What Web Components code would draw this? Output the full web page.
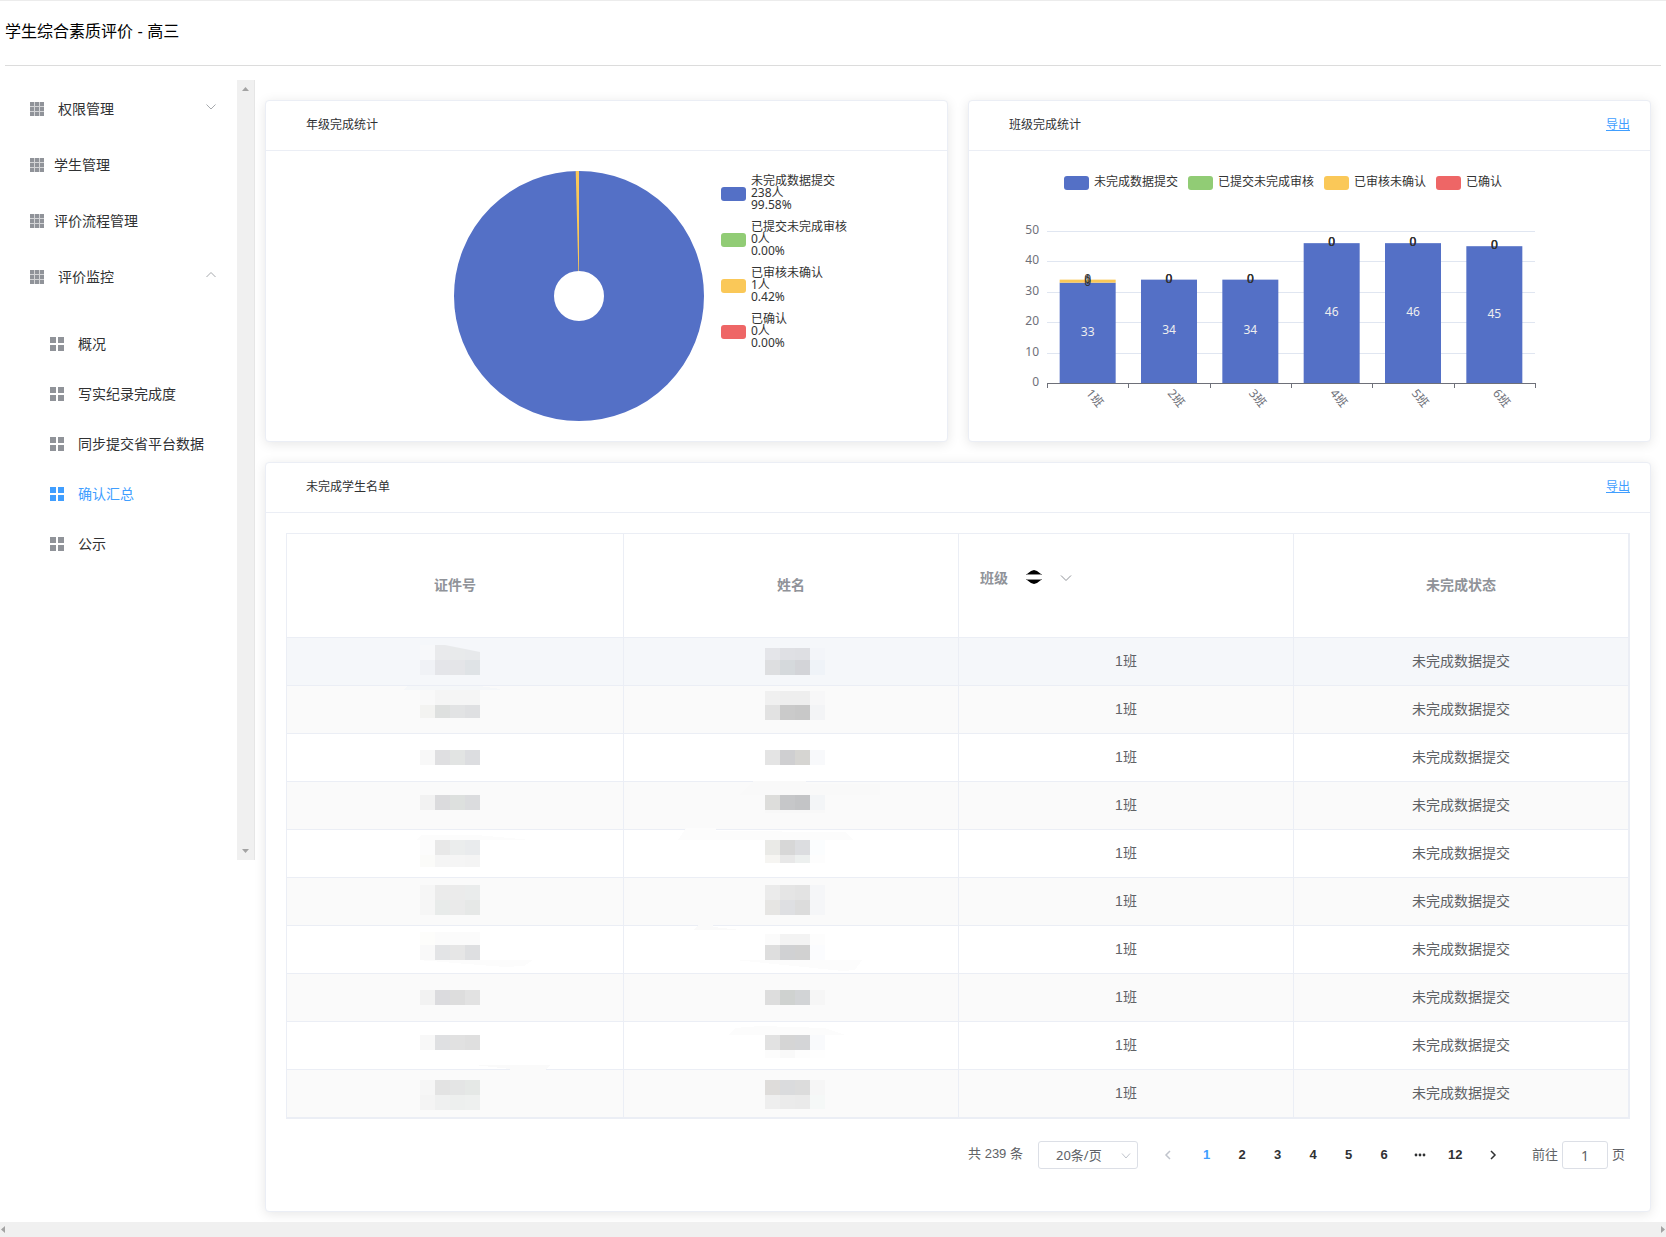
<!DOCTYPE html>
<html lang="zh-CN">
<head>
<meta charset="UTF-8">
<meta name="viewport" content="width=device-width, initial-scale=1.0">
<title>学生综合素质评价</title>
<style>
  html {
    --primary: #409eff;
    --text: #303133;
    --text-regular: #606266;
    --text-muted: #909399;
    --border: #ebeef5;
    --chart-font: "Noto Sans", "Noto Sans CJK SC", sans-serif;
  }
  body {
    margin: 0;
    min-height: 100vh;
    display: flex;
    flex-direction: column;
    background: #fff;
    color: var(--text);
    font-family: "Liberation Sans", "Noto Sans CJK SC", sans-serif;
    font-size: 14px;
  }
  .layout {
    flex: 1;
    display: flex;
    align-items: flex-start;
    margin-top: 14px;
  }
  main {
    flex: 1;
    min-width: 0;
    display: grid;
    grid-template-columns: 1fr 1fr;
    gap: 20px;
    padding: 20px 15px 10px 10px;
  }
  .wide { grid-column: 1 / -1; }
</style>
</head>
<body>
  <app-header>学生综合素质评价 - 高三</app-header>
  <div class="layout">
    <side-menu>
      <menu-item group>权限管理</menu-item>
      <menu-item>学生管理</menu-item>
      <menu-item>评价流程管理</menu-item>
      <menu-item group open>评价监控</menu-item>
      <menu-item slot="sub" sub>概况</menu-item>
      <menu-item slot="sub" sub>写实纪录完成度</menu-item>
      <menu-item slot="sub" sub>同步提交省平台数据</menu-item>
      <menu-item slot="sub" sub active>确认汇总</menu-item>
      <menu-item slot="sub" sub>公示</menu-item>
    </side-menu>
    <main>
      <panel-card>
        <span slot="title">年级完成统计</span>
        <pie-chart></pie-chart>
      </panel-card>
      <panel-card export>
        <span slot="title">班级完成统计</span>
        <bar-chart></bar-chart>
      </panel-card>
      <panel-card class="wide" export>
        <span slot="title">未完成学生名单</span>
        <student-table></student-table>
        <page-nav></page-nav>
      </panel-card>
    </main>
  </div>
  <scroll-strip></scroll-strip>

<script>
const SERIES = [
  { name: '未完成数据提交', color: '#5470c6', count: 238, percent: '99.58%' },
  { name: '已提交未完成审核', color: '#91cc75', count: 0, percent: '0.00%' },
  { name: '已审核未确认', color: '#fac858', count: 1, percent: '0.42%' },
  { name: '已确认', color: '#ee6666', count: 0, percent: '0.00%' }
];

class AppHeader extends HTMLElement {
  connectedCallback() {
    this.attachShadow({ mode: 'open' });
    this.shadowRoot.innerHTML = `
      <style>
        :host {
          display: block;
          padding: 0 5px;
          border-top: 1px solid #ececec;
        }
        h1 {
          margin: 0;
          padding-bottom: 2px;
          border-bottom: 1px solid #dcdcdc;
          color: #000;
          font-size: 16px;
          font-weight: 400;
          line-height: 62px;
        }
      </style>
      <h1><slot></slot></h1>
    `;
  }
}

class MenuItem extends HTMLElement {
  connectedCallback() {
    const sub = this.hasAttribute('sub');
    const group = this.hasAttribute('group');
    const open = this.hasAttribute('open');
    const size = sub ? 6 : 4;
    const step = sub ? 8 : 5;
    const count = sub ? 2 : 3;
    let squares = '';
    for (let r = 0; r < count; r++) {
      for (let c = 0; c < count; c++) {
        squares += `<rect x="${c * step}" y="${r * step}" width="${size}" height="${size}"/>`;
      }
    }
    // the nine squares stand on a lighter plate, so their gaps read as thin lines
    const plate = sub ? '' : '<rect width="14" height="14" opacity="0.4"/>';
    const icon = `<svg class="icon" viewBox="0 0 14 14" aria-hidden="true">${plate}${squares}</svg>`;
    const arrow = `<svg class="arrow" viewBox="0 0 12 8" aria-hidden="true"><path d="${open ? 'M1.500 6 L6 1.500 L10.500 6' : 'M1.500 1.500 L6 6 L10.500 1.500'}"/></svg>`;
    this.attachShadow({ mode: 'open' });
    this.shadowRoot.innerHTML = `
      <style>
        :host { display: block; }
        a, button {
          display: flex;
          align-items: center;
          box-sizing: border-box;
          width: 100%;
          height: 56px;
          padding: 0 20px 0 30px;
          gap: 10px;
          border: 0;
          background: none;
          color: var(--text);
          font: inherit;
          font-size: 14px;
          line-height: 20px;
          text-align: left;
          text-decoration: none;
          white-space: nowrap;
          cursor: pointer;
        }
        button { gap: 14px; }
        :host([sub]) a {
          height: 50px;
          padding-left: 50px;
          gap: 14px;
        }
        .icon { width: 14px; height: 14px; flex: none; fill: var(--text-muted); }
        :host([active]) a { color: var(--primary); }
        :host([active]) .icon { fill: var(--primary); }
        .arrow {
          width: 12px;
          height: 8px;
          margin-left: auto;
          margin-bottom: 4px;
          fill: none;
          stroke: #a6a9ad;
        }
      </style>
      ${group
        ? `<button type="button" aria-expanded="${open}">${icon}<slot></slot>${arrow}</button>`
        : `<a href="#">${icon}<slot></slot></a>`}
    `;
  }
}

class SideMenu extends HTMLElement {
  connectedCallback() {
    this.attachShadow({ mode: 'open' });
    this.shadowRoot.innerHTML = `
      <style>
        :host {
          display: flex;
          flex: none;
          box-sizing: border-box;
          width: 255px;
          height: 780px;
          border-right: 1px solid #e6e6e6;
        }
        nav { flex: 1; padding-top: 1px; }
        .sub { padding-top: 14px; }
        .track {
          display: flex;
          flex-direction: column;
          justify-content: space-between;
          align-items: center;
          box-sizing: border-box;
          width: 17px;
          padding: 7px 0;
          background: #f0f0f0;
        }
        .track svg { width: 7px; height: 4px; fill: #a3a3a3; }
      </style>
      <nav>
        <slot></slot>
        <div class="sub"><slot name="sub"></slot></div>
      </nav>
      <div class="track" aria-hidden="true">
        <svg viewBox="0 0 7 4"><path d="M0 4 L3.500 0 L7 4Z"/></svg>
        <svg viewBox="0 0 7 4"><path d="M0 0 L3.500 4 L7 0Z"/></svg>
      </div>
    `;
  }
}

class PanelCard extends HTMLElement {
  connectedCallback() {
    this.attachShadow({ mode: 'open' });
    this.shadowRoot.innerHTML = `
      <style>
        :host {
          display: block;
          min-width: 0;
          border: 1px solid var(--border);
          border-radius: 4px;
          background: #fff;
          box-shadow: 0 2px 12px rgba(0,0,0,0.1);
        }
        header {
          display: flex;
          justify-content: space-between;
          align-items: center;
          height: 47px;
          padding: 0 20px 2px 40px;
          border-bottom: 1px solid var(--border);
          font-size: 12px;
          line-height: 16px;
        }
        a { color: var(--primary); }
        .body { padding: 20px; }
      </style>
      <header>
        <slot name="title"></slot>
        ${this.hasAttribute('export') ? '<a href="#">导出</a>' : ''}
      </header>
      <div class="body"><slot></slot></div>
    `;
  }
}

class PieChart extends HTMLElement {
  connectedCallback() {
    // the only other visible slice is 1 of 239, it ends at twelve o'clock
    const angle = 2 * Math.PI / 239;
    const point = (r) => `${125 - r * Math.sin(angle)} ${125 - r * Math.cos(angle)}`;
    this.attachShadow({ mode: 'open' });
    this.shadowRoot.innerHTML = `
      <style>
        :host {
          display: flex;
          gap: 17px;
          height: 250px;
          padding-left: 168px;
          color: #333;
          font-family: var(--chart-font);
        }
        svg { width: 250px; height: 250px; flex: none; }
        ul { margin: 0; padding: 4px 0 0; list-style: none; }
        li {
          display: flex;
          align-items: center;
          gap: 5px;
          margin-bottom: 8px;
          font-size: 12px;
          line-height: 12px;
          white-space: nowrap;
        }
        i { width: 25px; height: 14px; border-radius: 3px; }
        div { padding-bottom: 2px; }
        span { display: block; }
      </style>
      <svg viewBox="0 0 250 250" role="img" aria-label="年级完成统计">
        <circle cx="125" cy="125" r="75" fill="none" stroke="#5470c6" stroke-width="100"/>
        <path d="M125 100 L125 0 L${point(125)} L${point(25)}Z" fill="#fac858"/>
      </svg>
      <ul>
        ${SERIES.map(s => `
          <li>
            <i style="background:${s.color}"></i>
            <div><span>${s.name}</span><span>${s.count}人</span><span>${s.percent}</span></div>
          </li>`).join('')}
      </ul>
    `;
  }
}

class BarChart extends HTMLElement {
  connectedCallback() {
    const rows = [[33, 0, 1, 0], [34, 0, 0, 0], [34, 0, 0, 0], [46, 0, 0, 0], [46, 0, 0, 0], [45, 0, 0, 0]];
    const left = 58, right = 546, top = 36, bottom = 188;
    const band = (right - left) / rows.length;
    const y = (v) => bottom - v * (bottom - top) / 50;
    let grid = '', bars = '', labels = '', axis = '';

    for (let v = 0; v <= 50; v += 10) {
      if (v) grid += `<line x1="${left}" x2="${right}" y1="${Math.round(y(v)) + 0.5}" y2="${Math.round(y(v)) + 0.5}" stroke="#e0e6f1"/>`;
      axis += `<text x="50" y="${y(v) + 3}" text-anchor="end">${v}</text>`;
    }
    rows.forEach((row, i) => {
      const center = left + band * (i + 0.5);
      let sum = 0;
      row.forEach((v, s) => {
        if (v) bars += `<rect x="${center - 28}" y="${y(sum + v)}" width="56" height="${y(sum) - y(sum + v)}" fill="${SERIES[s].color}"/>`;
        labels += `<text x="${center}" y="${y(sum + v / 2) + 3}" fill="${s === 0 ? '#eee' : '#333'}">${v}</text>`;
        sum += v;
      });
      axis += `<text transform="translate(${center + 1} 196) rotate(50)" y="4">${i + 1}班</text>`;
    });
    for (let i = 0; i <= rows.length; i++) {
      const x = Math.round(left + band * i) + 0.5;
      axis += `<line x1="${x}" x2="${x}" y1="${bottom}" y2="${bottom + 5}" stroke="#6e7079"/>`;
    }

    this.attachShadow({ mode: 'open' });
    this.shadowRoot.innerHTML = `
      <style>
        :host { display: block; height: 250px; font-family: var(--chart-font); }
        ul {
          display: flex;
          align-items: center;
          gap: 10px;
          height: 24px;
          margin: 0;
          padding: 0 0 0 75px;
          list-style: none;
          color: #333;
          font-size: 12px;
          line-height: 16px;
          white-space: nowrap;
        }
        li { display: flex; align-items: center; gap: 5px; }
        span { padding-bottom: 2px; }
        i { width: 25px; height: 14px; border-radius: 3px; }
        svg { display: block; width: 588px; height: 226px; font-size: 12px; }
      </style>
      <ul>${SERIES.map(s => `<li><i style="background:${s.color}"></i><span>${s.name}</span></li>`).join('')}</ul>
      <svg viewBox="0 0 588 226" role="img" aria-label="班级完成统计">
        ${grid}
        ${bars}
        <g text-anchor="middle">${labels}</g>
        <line x1="${left}" x2="${right + 1}" y1="${bottom + 0.5}" y2="${bottom + 0.5}" stroke="#6e7079"/>
        <g fill="#6e7079">${axis}</g>
      </svg>
    `;
  }
}

// masked cells: [top, height, four block colours], one list per row
const ID_MASKS = [
  [[7, 15, 'f7f8fa e9eaec e8eaeb e7e9eb'], [22, 15, 'f0f2f6 e4e5e9 e4e5e8 dfe3e6']],
  [[4, 15, 'f9f9f9 f5f5f5 f5f5f5 f5f5f5'], [19, 13, 'f3f3f1 dee0df e2e3e4 dfe0e2']],
  [[16, 15, 'f8f8f8 dfdfe1 e2e4e3 dcdde0']],
  [[13, 15, 'f2f2f2 dbdbdd dde0de dbdcde']],
  [[10, 15, 'fcfcfc e8e8e8 ebeded e9ebed'], [25, 12, 'fbfbf9 f5f5f5 f5f5f5 f4f4f4']],
  [[7, 15, 'f6f6f6 ebebeb ebebeb eaecec'], [22, 15, 'f6f6f6 e8ebea eaeaea e6e8e7']],
  [[6, 13, 'fdfdfb fbfbfb fbfbfb fbfbfb'], [19, 15, 'f9f9f9 e3e4e6 e6e6e6 dedfe1']],
  [[16, 15, 'f2f2f2 dbdbde dddddd e2e2e2']],
  [[13, 15, 'f8f8f8 dfe0e2 e1e1e1 dfdfdf']],
  [[10, 15, 'f6f6f6 e3e3e3 e4e5e5 e5e8e6'], [25, 15, 'f4f4f4 eff0f0 edefee eef0ef']]
];
const NAME_MASKS = [
  [[10, 12, 'e4e5e9 dfe0e4 dedfe3 f3f5f9'], [22, 15, 'dddee0 d5d9dc d3d4d8 eff3f8']],
  [[5, 14, 'f0f0f0 eeeeee eeeeee f7f7f8'], [19, 15, 'e2e2e2 cacaca c8c8c8 f3f4f6']],
  [[16, 15, 'e4e4e4 cfcfd1 d6d5d2 f8f9fb']],
  [[13, 15, 'dddddb c6c7c9 c3c4c6 f3f5f7'], [28, 3, 'f8f8f8 f8f8f8 f8f8f8 f8f8f8']],
  [[10, 15, 'eaeae7 d7d7d7 dcdde0 fbfdfe'], [25, 8, 'f6f5f2 e8e8e8 edf0ef fdfdfd']],
  [[7, 15, 'ebebeb e5e5e5 e3e3e3 f5f6f8'], [22, 15, 'e6e5e3 dedfe2 dcdcdc f5f6f8']],
  [[8, 11, 'fbfbfb f3f3f3 f3f3f3 fdfdfd'], [19, 15, 'dedede d0d1d3 d1d1d1 fbfcfe']],
  [[16, 15, 'dddddd cfd2d0 d2d4d6 f6f6f6']],
  [[13, 15, 'e2e2e2 d5d5d5 d4d5d7 f9fafc'], [28, 8, 'fcfcfc f9f9f9 fdfdfd fefefe']],
  [[10, 15, 'dedcda dadbdd dcdcdc f6f6f6'], [25, 14, 'eeeeee ebebeb eaeaea f5f8f7']]
];
// faint brush marks that run past the blocks
const ID_SMEARS = {
  1: '<path d="M-17 4 L-12 0 L60 0 L80 3 L80 4Z" fill="#f5f7f9"/>',
  4: '<path d="M-4 10 L2 5 L56 5 L90 8 L110 10Z" fill="#fcfcfc"/>',
  6: '<path d="M-2 34 L113 34 L104 40 L85 41Z" fill="#fcfcfc"/>',
  8: '<path d="M55 43 L130 43 L126 47 L126 48 L90 48 L90 47Z" fill="#fafafa"/>'
};
const NAME_SMEARS = {
  3: '<path d="M-25 13 L-12 -1 L41 -1 L41 2 L115 2 L115 13Z" fill="#f9f9f9"/>',
  4: '<path d="M-87 10 L-79 -2 L-49 -2 L-49 1 L80 2 L88 10Z" fill="#fcfcfc"/>',
  6: '<path d="M-72 4 L-67 -1 L-52 -1 L-52 1 L-24 4Z" fill="#fafafa"/><path d="M-30 34 L97 34 L90 44 L78 45Z" fill="#fcfcfc"/>',
  8: '<path d="M-37 13 L-30 6 L-5 4 L60 6 L80 13Z" fill="#fcfcfc"/>'
};

class StudentTable extends HTMLElement {
  mask(rows, kind, smear, slanted) {
    const blocks = rows.map(([top, height, colors]) => colors.split(' ').map((color, i) =>
      `<rect x="${i * 15}" y="${top}" width="15" height="${height}" fill="#${color}"/>`).join('')).join('');
    const clip = slanted ? 'style="clip-path:polygon(0 7px,25px 7px,60px 14px,60px 37px,0 37px)"' : '';
    return `<svg class="mask ${kind}" viewBox="0 0 60 47" shape-rendering="crispEdges" aria-hidden="true" ${clip}>${smear || ''}${blocks}</svg>`;
  }

  connectedCallback() {
    this.attachShadow({ mode: 'open' });
    this.shadowRoot.innerHTML = `
      <style>
        :host { display: block; }
        table {
          width: 100%;
          table-layout: fixed;
          border: 1px solid var(--border);
          border-spacing: 0;
          color: var(--text-regular);
          font-size: 14px;
          line-height: 20px;
          text-align: center;
        }
        col:first-child { width: 337px; }
        th, td {
          padding: 0;
          border: solid var(--border);
          border-width: 0 1px 1px 0;
        }
        th {
          height: 101px;
          padding-bottom: 2px;
          color: var(--text-muted);
          font-weight: 700;
        }
        td { height: 47px; }
        td:nth-child(n+3) { height: 45px; padding-bottom: 2px; }
        tr:nth-child(even) td { background: #fafafa; }
        tbody tr:first-child td { background: #f5f7fa; }
        .filter {
          display: flex;
          align-items: center;
          padding: 0 0 14px 21px;
        }
        .filter button {
          display: flex;
          margin: 0;
          padding: 0;
          border: 0;
          background: none;
        }
        .sort { width: 18px; height: 16px; margin: 0 0 2px 17px; }
        .down { width: 12px; height: 8px; margin-left: 17px; fill: none; stroke: var(--text-muted); }
        .mask { display: block; width: 60px; height: 47px; margin: 0 auto; overflow: visible; }
        .id { padding-right: 10px; }
        .name { padding-left: 7px; }
      </style>
      <table>
        <colgroup><col><col><col><col></colgroup>
        <thead>
          <tr>
            <th>证件号</th>
            <th>姓名</th>
            <th>
              <div class="filter">
                班级
                <button type="button" aria-label="排序">
                  <svg class="sort" viewBox="0 0 18 16">
                    <path d="M2 5 L6 2 L9 1 L12 2 L16 5Z M2 11 L6 14 L9 15 L12 14 L16 11Z"/>
                    <path d="M1 5.500 H17 M1 10.500 H17" stroke="#888"/>
                  </svg>
                </button>
                <button type="button" aria-label="筛选">
                  <svg class="down" viewBox="0 0 12 8"><path d="M1 1.500 L6 6.500 L11 1.500"/></svg>
                </button>
              </div>
            </th>
            <th>未完成状态</th>
          </tr>
        </thead>
        <tbody>
          ${ID_MASKS.map((rows, i) => `
            <tr>
              <td>${this.mask(rows, 'id', ID_SMEARS[i], i === 0)}</td>
              <td>${this.mask(NAME_MASKS[i], 'name', NAME_SMEARS[i])}</td>
              <td>1班</td>
              <td>未完成数据提交</td>
            </tr>`).join('')}
        </tbody>
      </table>
    `;
  }
}

class PageNav extends HTMLElement {
  connectedCallback() {
    this.attachShadow({ mode: 'open' });
    this.shadowRoot.innerHTML = `
      <style>
        :host {
          display: flex;
          justify-content: flex-end;
          align-items: center;
          height: 28px;
          padding: 22px 5px 22px 0;
          color: var(--text-regular);
          font-size: 13px;
          line-height: 24px;
          white-space: nowrap;
        }
        .total { margin: 0 15px 2px 0; }
        .size { position: relative; width: 100px; height: 28px; }
        select, input {
          box-sizing: border-box;
          height: 28px;
          border: 1px solid #dcdfe6;
          border-radius: 3px;
          background: #fff;
          color: var(--text-regular);
          font-family: var(--chart-font);
          font-size: 13px;
          appearance: none;
        }
        select { width: 100px; padding: 0 25px 0 17px; }
        input { width: 46px; margin: 0 4px; padding: 0; font-size: 14px; text-align: center; }
        .size svg {
          position: absolute;
          top: 11px;
          right: 7px;
          width: 10px;
          height: 8px;
          pointer-events: none;
          stroke: #c0c4cc;
        }
        svg { fill: none; }
        button {
          display: flex;
          justify-content: center;
          align-items: center;
          width: 100%;
          height: 24px;
          padding: 0;
          border: 0;
          background: none;
          color: var(--text);
          font: inherit;
          font-weight: 700;
        }
        ul {
          display: grid;
          grid-auto-flow: column;
          grid-auto-columns: 1fr;
          width: 284px;
          margin: 0;
          padding: 0;
          list-style: none;
        }
        .active { color: var(--primary); }
        .step { width: 18px; stroke: var(--text); }
        .step svg { width: 8px; height: 10px; }
        .prev { margin: 0 12px 0 21px; }
        .prev svg { stroke: #c0c4cc; }
        .next { margin-left: 11px; }
        .jump { margin-left: 30px; }
      </style>
      <span class="total">共 239 条</span>
      <div class="size">
        <select aria-label="每页条数"><option>20条/页</option></select>
        <svg viewBox="0 0 10 8" aria-hidden="true"><path d="M1 1.500 L5 6 L9 1.500"/></svg>
      </div>
      <button class="step prev" type="button" aria-label="上一页" disabled><svg viewBox="0 0 8 10"><path d="M6 1 L2 5 L6 9" stroke-width="1.500"/></svg></button>
      <ul>
        ${['1', '2', '3', '4', '5', '6', '', '12'].map((n, i) => `<li><button type="button" class="${i === 0 ? 'active' : ''}" aria-label="${n ? `第${n}页` : '更多页'}">${n ||
          '<svg width="12" height="4" viewBox="0 0 12 4"><g fill="#303133"><circle cx="2" cy="2" r="1.400"/><circle cx="6" cy="2" r="1.400"/><circle cx="10" cy="2" r="1.400"/></g></svg>'}</button></li>`).join('')}
      </ul>
      <button class="step next" type="button" aria-label="下一页"><svg viewBox="0 0 8 10"><path d="M2 1 L6 5 L2 9" stroke-width="1.500"/></svg></button>
      <label class="jump" for="page">前往</label>
      <input id="page" type="text" value="1">
      <span>页</span>
    `;
  }
}

class ScrollStrip extends HTMLElement {
  connectedCallback() {
    this.attachShadow({ mode: 'open' });
    this.shadowRoot.innerHTML = `
      <style>
        :host {
          display: flex;
          justify-content: space-between;
          align-items: center;
          height: 15px;
          padding: 0 1px;
          background: #f0f0f0;
        }
        svg { width: 4px; height: 7px; fill: #a3a3a3; }
      </style>
      <svg viewBox="0 0 4 7" aria-hidden="true"><path d="M4 0 L0 3.500 L4 7Z"/></svg>
      <svg viewBox="0 0 4 7" aria-hidden="true"><path d="M0 0 L4 3.500 L0 7Z"/></svg>
    `;
  }
}

customElements.define('app-header', AppHeader);
customElements.define('menu-item', MenuItem);
customElements.define('side-menu', SideMenu);
customElements.define('panel-card', PanelCard);
customElements.define('pie-chart', PieChart);
customElements.define('bar-chart', BarChart);
customElements.define('student-table', StudentTable);
customElements.define('page-nav', PageNav);
customElements.define('scroll-strip', ScrollStrip);
</script>
</body>
</html>
